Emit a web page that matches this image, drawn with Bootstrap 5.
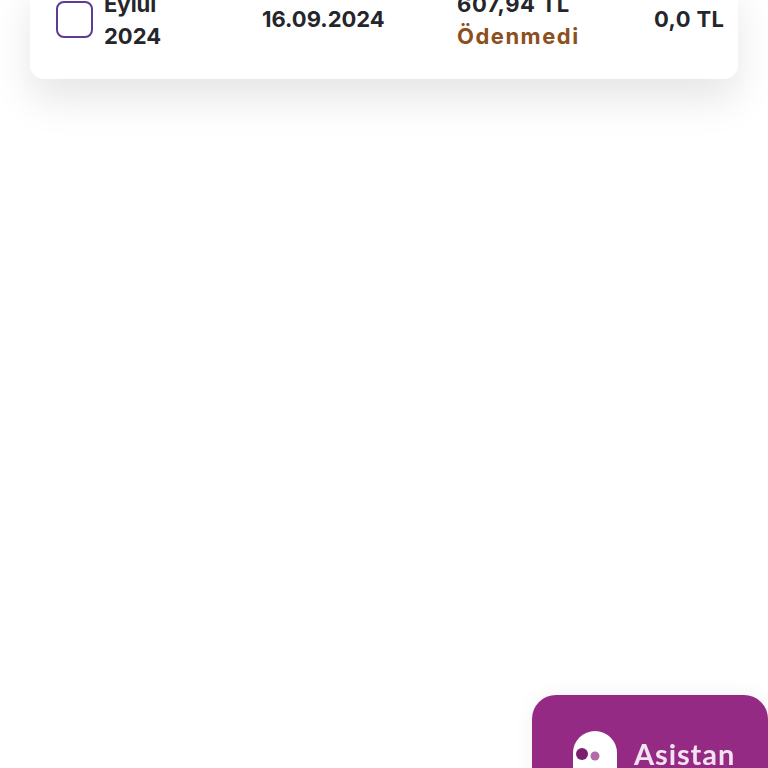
<!DOCTYPE html>
<html lang="tr">
<head>
<meta charset="utf-8">
<title>Ödemeler</title>
<link href="https://cdn.jsdelivr.net/npm/bootstrap@5.3.0/dist/css/bootstrap.min.css" rel="stylesheet">
<style>
html,body{height:768px;overflow:hidden;background:#fff}
.page-wrap{padding:0 30px;margin-top:-20px}
.pay-card{border-radius:14px;box-shadow:0 20px 40px rgba(0,0,0,.1);height:99px;padding-left:26px;font-family:Inter,"Open Sans",sans-serif;font-weight:700;font-size:22px;line-height:32px;color:#24262b}
.pay-check{width:37px;height:37px;border:2px solid #5d3b97;border-radius:8px;margin-right:11px;margin-top:21px;flex:none;background:#fff}
.col-month{width:158px;flex:none;padding-top:8px}
.col-date{width:195px;flex:none;padding-top:23px}
.col-amt{width:197px;flex:none;padding-top:8px;letter-spacing:.6px}
.col-rest{padding-top:23px;white-space:nowrap;letter-spacing:.4px}
.st-unpaid{color:#8c4f1e;letter-spacing:1.5px}
.asst-box{position:fixed;left:532px;top:695px;width:236px;height:120px;background:#952a85;border-radius:24px 24px 0 0;box-shadow:0 0 20px rgba(0,0,0,.06);padding:36px 0 0 41px}
.asst-ic{width:44px;height:58px;flex:none}
.asst-lbl{font-family:Lato,Inter,sans-serif;font-weight:700;font-size:29px;letter-spacing:.9px;color:#f3e3f0;margin-left:17px;line-height:46px}
</style>
</head>
<body>
<div class="page-wrap">
  <div class="pay-card bg-white d-flex align-items-start">
    <div class="pay-check"></div>
    <div class="col-month">Eylül<br>2024</div>
    <div class="col-date">16.09.2024</div>
    <div class="col-amt">607,94 TL<br><span class="st-unpaid">Ödenmedi</span></div>
    <div class="col-rest">0,0 TL</div>
  </div>
</div>
<div class="asst-box d-flex align-items-start">
  <svg class="asst-ic" viewBox="0 0 44 58" aria-hidden="true">
    <path d="M0 22a22 22 0 0 1 44 0v36H0z" fill="#fff"/>
    <circle cx="9" cy="23" r="6" fill="#7d1f6f"/>
    <circle cx="22" cy="25" r="4.5" fill="#b36aa8"/>
  </svg>
  <span class="asst-lbl">Asistan</span>
</div>
<script src="https://cdn.jsdelivr.net/npm/bootstrap@5.3.0/dist/js/bootstrap.bundle.min.js"></script>
</body>
</html>
